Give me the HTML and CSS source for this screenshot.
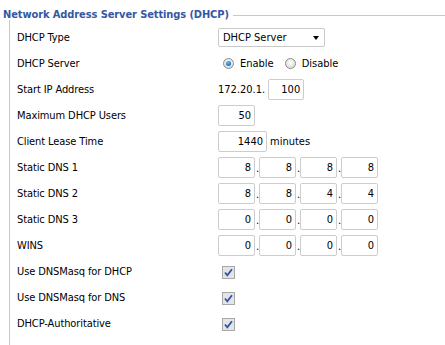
FILE: index.html
```html
<!DOCTYPE html>
<html>
<head>
<meta charset="utf-8">
<link rel="stylesheet" href="styles.css">
</head>
<body>
<div class="section">
  <div class="legend-row">
    <span class="legend">Network Address Server Settings (DHCP)</span>
    <span class="legend-line"></span>
  </div>
  <div class="body">
    <div class="row">
      <span class="label">DHCP Type</span>
      <div class="select"><span>DHCP Server</span><span class="arrow"></span></div>
    </div>
    <div class="row">
      <span class="label">DHCP Server</span>
      <div class="radios">
        <span class="radio checked"></span><span class="rlabel">Enable</span>
        <span class="radio"></span><span class="rlabel">Disable</span>
      </div>
    </div>
    <div class="row">
      <span class="label">Start IP Address</span>
      <span class="prefix">172.20.1.</span><span class="box w36">100</span>
    </div>
    <div class="row">
      <span class="label">Maximum DHCP Users</span>
      <span class="box w37">50</span>
    </div>
    <div class="row">
      <span class="label">Client Lease Time</span>
      <span class="box w49">1440</span><span class="unit">minutes</span>
    </div>
    <div class="row">
      <span class="label">Static DNS 1</span>
      <span class="box w37">8</span><span class="dot">.</span><span class="box w37">8</span><span class="dot">.</span><span class="box w37">8</span><span class="dot">.</span><span class="box w37">8</span>
    </div>
    <div class="row">
      <span class="label">Static DNS 2</span>
      <span class="box w37">8</span><span class="dot">.</span><span class="box w37">8</span><span class="dot">.</span><span class="box w37">4</span><span class="dot">.</span><span class="box w37">4</span>
    </div>
    <div class="row">
      <span class="label">Static DNS 3</span>
      <span class="box w37">0</span><span class="dot">.</span><span class="box w37">0</span><span class="dot">.</span><span class="box w37">0</span><span class="dot">.</span><span class="box w37">0</span>
    </div>
    <div class="row">
      <span class="label">WINS</span>
      <span class="box w37">0</span><span class="dot">.</span><span class="box w37">0</span><span class="dot">.</span><span class="box w37">0</span><span class="dot">.</span><span class="box w37">0</span>
    </div>
    <div class="row">
      <span class="label">Use DNSMasq for DHCP</span>
      <span class="check"><svg width="11" height="11" viewBox="0 0 11 11"><path d="M2 5.5 L4.3 8.3 L9 2.2" fill="none" stroke="#2f52aa" stroke-width="1.8"/></svg></span>
    </div>
    <div class="row">
      <span class="label">Use DNSMasq for DNS</span>
      <span class="check"><svg width="11" height="11" viewBox="0 0 11 11"><path d="M2 5.5 L4.3 8.3 L9 2.2" fill="none" stroke="#2f52aa" stroke-width="1.8"/></svg></span>
    </div>
    <div class="row">
      <span class="label">DHCP-Authoritative</span>
      <span class="check"><svg width="11" height="11" viewBox="0 0 11 11"><path d="M2 5.5 L4.3 8.3 L9 2.2" fill="none" stroke="#2f52aa" stroke-width="1.8"/></svg></span>
    </div>
  </div>
</div>
</body>
</html>
```

FILE: styles.css
```css
html, body {
  margin: 0;
  padding: 0;
  background: #ffffff;
}
body {
  font-family: "DejaVu Sans Condensed", "DejaVu Sans", sans-serif;
  font-size: 11px;
  color: #000000;
}
.section {
  padding-top: 8px;
}
.legend-row {
  display: flex;
  align-items: center;
  padding-left: 3px;
  height: 12px;
}
.legend {
  font-weight: bold;
  color: #3358a4;
  font-size: 11px;
  letter-spacing: -0.1px;
  white-space: nowrap;
}
.legend-line {
  flex: 1;
  border-top: 1px solid #c8c8c8;
  margin-left: 4px;
  margin-top: 2px;
}
.body {
  margin-left: 9px;
  border-left: 1px solid #c8c8c8;
  padding-left: 7px;
  padding-top: 4px;
  height: 330px;
}
.row {
  display: flex;
  align-items: center;
  height: 26px;
}
.label {
  width: 201px;
  flex: none;
  letter-spacing: -0.1px;
}
.select {
  box-sizing: border-box;
  width: 107px;
  height: 19px;
  border: 1px solid #c9c9c9;
  border-radius: 2px;
  display: flex;
  align-items: center;
  justify-content: space-between;
  padding: 0 5px 0 4px;
}
.arrow {
  width: 0;
  height: 0;
  border-left: 3.5px solid transparent;
  border-right: 3.5px solid transparent;
  border-top: 4px solid #000;
  margin-top: 1px;
}
.radios {
  display: flex;
  align-items: center;
  padding-left: 5px;
}
.radio {
  box-sizing: border-box;
  width: 11px;
  height: 11px;
  border-radius: 50%;
  border: 1px solid #8c8c8c;
  background: radial-gradient(circle at 50% 40%, #ffffff 0%, #e4e4e4 60%, #cfcfcf 100%);
  display: inline-block;
  position: relative;
}
.radio.checked::after {
  content: "";
  position: absolute;
  left: 2px;
  top: 2px;
  width: 5px;
  height: 5px;
  border-radius: 50%;
  background: radial-gradient(circle at 40% 35%, #6fc3f2 0%, #1e7fc8 55%, #0a4f8f 100%);
}
.rlabel {
  margin-left: 6px;
  margin-right: 11px;
}
.prefix {
  margin-right: 3px;
}
.box {
  box-sizing: border-box;
  height: 21px;
  border: 1px solid #cdcdcd;
  border-radius: 2px;
  text-align: right;
  padding-right: 3px;
  line-height: 19px;
  color: #000000;
  flex: none;
}
.w36 { width: 36px; }
.w37 { width: 37px; }
.w49 { width: 49px; }
.dot {
  width: 4px;
  padding-left: 1px;
  box-sizing: border-box;
  align-self: flex-end;
  margin-bottom: 5px;
}
.unit {
  margin-left: 3px;
}
.check {
  box-sizing: border-box;
  width: 13px;
  height: 13px;
  border: 1px solid #a8a8a8;
  background: #e4e4e4;
  margin-left: 4px;
  margin-top: 3px;
  display: flex;
  align-items: center;
  justify-content: center;
}
.check svg {
  display: block;
}
```
